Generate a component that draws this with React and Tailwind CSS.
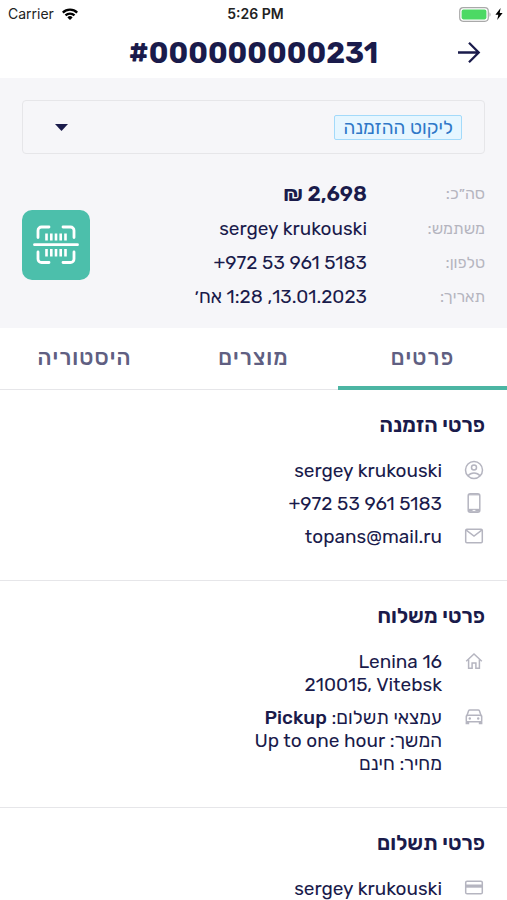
import React, { useState } from 'react';

const TABS = [
  { id: 'details', label: 'פרטים' },
  { id: 'products', label: 'מוצרים' },
  { id: 'history', label: 'היסטוריה' },
];

function StatusBar() {
  return (
    <div
      dir="ltr"
      className="grid h-7 grid-cols-3 items-center pr-1 pl-2 font-['Inter',sans-serif] text-[14px] leading-5 text-[#222]"
    >
      <div className="flex items-center gap-2">
        <span>Carrier</span>
        <svg className="h-3 w-4" viewBox="0 0 16 12" fill="none" stroke="#000" strokeWidth="2.3">
          <path d="M0.8 4.6a10.2 10.2 0 0 1 14.4 0" />
          <path d="M3.5 7.4a6.4 6.4 0 0 1 9 0" />
          <path d="M8 12 5.4 9.4a3.7 3.7 0 0 1 5.2 0z" fill="#000" stroke="none" />
        </svg>
      </div>
      <span className="text-center font-semibold">5:26 PM</span>
      <div className="flex items-center justify-end gap-1">
        <svg className="h-[15px] w-8" viewBox="0 0 32 15" fill="none">
          <rect x="0.7" y="0.7" width="28.6" height="13.6" rx="3.5" stroke="#a9a9a9" strokeWidth="1.2" />
          <rect x="2.6" y="2.6" width="24.8" height="9.8" rx="1.8" fill="#4cd964" />
          <path d="M30.5 5.2c1.4.7 1.4 3.9 0 4.6z" fill="#a9a9a9" />
        </svg>
        <svg className="h-3 w-2" viewBox="0 0 8 12" fill="#000">
          <path d="M5.6 0 0.4 6.8h2.9L2.2 12 7.6 4.9H4.7z" />
        </svg>
      </div>
    </div>
  );
}

function ScanIcon() {
  return (
    <svg className="h-[46px] w-[46px]" viewBox="0 0 46 46" fill="none" stroke="#fff" strokeWidth="2.8" strokeLinecap="round">
      <path d="M5 15.5v-7A3.5 3.5 0 0 1 8.5 5H16" />
      <path d="M30 5h7.5A3.5 3.5 0 0 1 41 8.5v7" />
      <path d="M5 30v7a3.5 3.5 0 0 0 3.5 3.5H16" />
      <path d="M30 40.5h7.5A3.5 3.5 0 0 0 41 37v-7" />
      <path d="M1.5 22.7h43" />
      <path d="M13.5 11.5v7M18.3 11.5v7M23 11.5v7M27.7 11.5v7M32.5 11.5v7" strokeWidth="2.6" strokeLinecap="butt" />
      <path d="M13.5 27v7.5M18.3 27v7.5M23 27v7.5M27.7 27v7.5M32.5 27v7.5" strokeWidth="2.6" strokeLinecap="butt" />
    </svg>
  );
}

function UserIcon() {
  return (
    <svg className="h-[22px] w-[22px]" viewBox="0 0 22 22" fill="none" stroke="currentColor" strokeWidth="1.5">
      <circle cx="11" cy="11" r="8.5" />
      <circle cx="11" cy="8.6" r="2.5" />
      <path d="M5 16.8c1.5-1.9 3.6-2.8 6-2.8s4.5.9 6 2.8" />
    </svg>
  );
}

function PhoneIcon() {
  return (
    <svg className="h-[22px] w-[22px]" viewBox="0 0 22 22" fill="none">
      <rect x="5.2" y="1.7" width="11.6" height="18.6" rx="2" stroke="currentColor" strokeWidth="1.5" />
      <path d="M5 16.8h12v3H5z" fill="currentColor" />
      <path d="M5.5 2.2h11v1.2h-11z" fill="currentColor" />
      <path d="M9.6 18.4h2.8" stroke="#fff" strokeWidth="1" />
    </svg>
  );
}

function MailIcon() {
  return (
    <svg className="h-[22px] w-[22px]" viewBox="0 0 22 22" fill="none" stroke="currentColor" strokeWidth="1.5">
      <rect x="2.7" y="4.2" width="16.6" height="13.6" rx="1.2" />
      <path d="M3.2 5.2 11 11l7.8-5.8" />
    </svg>
  );
}

function HomeIcon() {
  return (
    <svg className="h-[22px] w-[22px]" viewBox="0 0 22 22" fill="none" stroke="currentColor" strokeWidth="1.5">
      <path d="M3.2 11.2 11 4l7.8 7.2" />
      <path d="M5.6 9.5v8.7h3.5V13h3.8v5.2h3.5V9.5" />
    </svg>
  );
}

function CarIcon() {
  return (
    <svg className="h-[22px] w-[22px]" viewBox="0 0 22 22" fill="none" stroke="currentColor" strokeWidth="1.5">
      <path d="M3.7 10.2 5.6 4.8a1.4 1.4 0 0 1 1.3-.9h8.2a1.4 1.4 0 0 1 1.3.9l1.9 5.4" />
      <rect x="3.3" y="9.2" width="15.4" height="6.6" rx="1" />
      <path d="M2.6 15.6h3.6v2.6H2.6zM15.8 15.6h3.6v2.6h-3.6z" fill="currentColor" stroke="none" />
      <circle cx="6.8" cy="12.5" r="1.2" fill="currentColor" stroke="none" />
      <circle cx="15.2" cy="12.5" r="1.2" fill="currentColor" stroke="none" />
    </svg>
  );
}

function CardIcon() {
  return (
    <svg className="h-[22px] w-[22px]" viewBox="0 0 22 22" fill="none">
      <rect x="2.7" y="4.2" width="16.6" height="12.6" rx="1.4" stroke="currentColor" strokeWidth="1.5" />
      <path d="M2.7 7.5h16.6v3.2H2.7z" fill="currentColor" />
    </svg>
  );
}

function SummaryRow({ label, children }) {
  return (
    <div className="flex">
      <dt className="w-[118px] shrink-0 text-[16px] text-[#b5b5bf]">{label}</dt>
      <dd>{children}</dd>
    </div>
  );
}

function Section({ title, children }) {
  return (
    <section className="border-b border-[#e6e6e9] px-[22px] pt-6 pb-8">
      <h2 className="mb-[23px] text-[21px] leading-[22px] font-semibold">{title}</h2>
      <ul className="flex flex-col gap-[10px]">{children}</ul>
    </section>
  );
}

function InfoRow({ icon, children }) {
  return (
    <li className="flex gap-[21px]">
      <span className="shrink-0 text-[#b5b5c0]">{icon}</span>
      <div>{children}</div>
    </li>
  );
}

function App() {
  const [activeTab, setActiveTab] = useState('details');
  const [status, setStatus] = useState('picking');

  return (
    <div
      dir="rtl"
      lang="he"
      className="min-h-screen bg-white font-['Rubik','Inter','Open_Sans',sans-serif] text-[19px] leading-[23px] text-[#1a1b4b]"
    >
      <StatusBar />

      <header className="grid h-[50px] grid-cols-[1fr_auto_1fr] items-center px-[22px]">
        <button type="button" aria-label="חזרה" className="justify-self-start px-1">
          <svg className="h-6 w-6" viewBox="0 0 24 24" fill="none" stroke="currentColor" strokeWidth="2.3">
            <path d="M1 11.5h21M12 1.8l9.7 9.7-9.7 9.7" />
          </svg>
        </button>
        <h1 dir="ltr" className="text-[29px] leading-8 font-bold">#000000000231</h1>
      </header>

      <div className="bg-[#f6f6f9] px-[22px] pt-[22px] pb-5">
        <label className="flex h-[54px] items-center justify-between rounded-[4px] border border-[#e6e6e9] pr-[22px] pl-8">
          <select
            value={status}
            onChange={(e) => setStatus(e.target.value)}
            aria-label="סטטוס הזמנה"
            className="h-[25px] appearance-none rounded-[2px] border border-[#a3dafa] bg-[#e6f6ff] px-2 text-[19px] leading-[23px] text-[#2f78c8]"
          >
            <option value="picking">ליקוט ההזמנה</option>
          </select>
          <svg className="h-[7px] w-[13px]" viewBox="0 0 13 7" fill="currentColor">
            <path d="M0 0h13L6.5 7z" />
          </svg>
        </label>

        <div className="mt-7 flex items-center justify-between">
          <dl className="flex flex-col gap-[11px]">
            <SummaryRow label="סה״כ:">
              <span className="text-[21px] font-semibold">2,698 ₪</span>
            </SummaryRow>
            <SummaryRow label="משתמש:">sergey krukouski</SummaryRow>
            <SummaryRow label="טלפון:">
              <span dir="ltr">+972 53 961 5183</span>
            </SummaryRow>
            <SummaryRow label="תאריך:">13.01.2023, 1:28 אח׳</SummaryRow>
          </dl>
          <button
            type="button"
            aria-label="סריקת ברקוד"
            className="flex h-[70px] w-[68px] items-center justify-center rounded-[10px] bg-[#4cbfab]"
          >
            <ScanIcon />
          </button>
        </div>
      </div>

      <nav className="grid grid-cols-3 border-b border-[#e6e6e9]">
        {TABS.map((tab) => (
          <button
            key={tab.id}
            type="button"
            onClick={() => setActiveTab(tab.id)}
            className={`-mb-px h-[62px] border-b-4 text-[22px] leading-[23px] font-medium tracking-wider text-[#605f82] ${
              activeTab === tab.id ? 'border-[#4cb5a3]' : 'border-transparent'
            }`}
          >
            {tab.label}
          </button>
        ))}
      </nav>

      <main>
        <Section title="פרטי הזמנה">
          <InfoRow icon={<UserIcon />}>sergey krukouski</InfoRow>
          <InfoRow icon={<PhoneIcon />}>
            <span dir="ltr">+972 53 961 5183</span>
          </InfoRow>
          <InfoRow icon={<MailIcon />}>topans@mail.ru</InfoRow>
        </Section>

        <Section title="פרטי משלוח">
          <InfoRow icon={<HomeIcon />}>
            <p>Lenina 16</p>
            <p dir="ltr" className="text-right">210015, Vitebsk</p>
          </InfoRow>
          <InfoRow icon={<CarIcon />}>
            <p>
              עמצאי תשלום: <b className="font-medium">Pickup</b>
            </p>
            <p>המשך: Up to one hour</p>
            <p>מחיר: חינם</p>
          </InfoRow>
        </Section>

        <Section title="פרטי תשלום">
          <InfoRow icon={<CardIcon />}>sergey krukouski</InfoRow>
        </Section>
      </main>
    </div>
  );
}

export default App;
